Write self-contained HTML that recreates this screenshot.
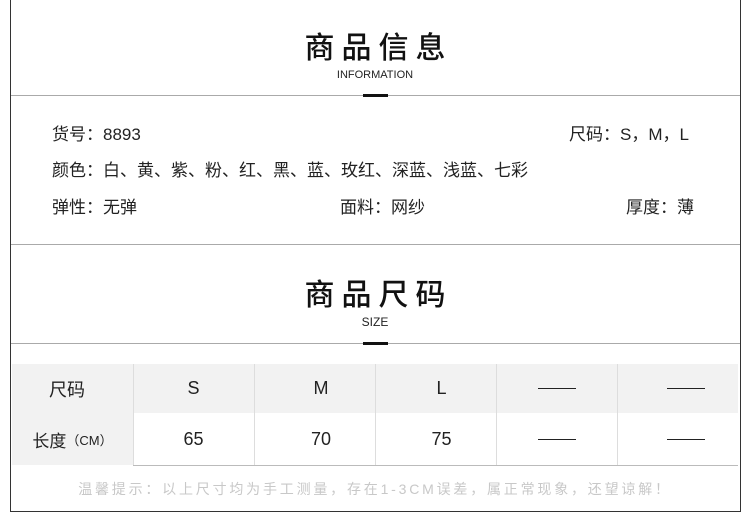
<!DOCTYPE html>
<html><head><meta charset="utf-8"><style>
*{margin:0;padding:0;box-sizing:border-box}
body{width:750px;height:512px;background:#fff;position:relative;overflow:hidden;font-family:"Liberation Sans","Noto Sans CJK SC",sans-serif;color:#222}
.a{position:absolute}
.frame{left:10px;top:0;width:731px;height:512px;border-left:1.5px solid #333;border-right:1.5px solid #333;border-bottom:1.5px solid #333}
.hl{height:1px;background:#aaa;left:11px;width:729px}
.bar{width:25px;height:3px;background:#111;left:363px}
.title{width:750px;left:0;text-align:center;font-size:30px;letter-spacing:7px;padding-left:7px;font-weight:500;color:#111}
.sub{width:750px;left:0;text-align:center;font-size:11px;color:#222}
.t{font-size:17px;white-space:nowrap}
.cell{position:absolute;display:flex;align-items:center;justify-content:center;font-size:18px;color:#222}
.dash{display:inline-block;width:38px;height:1px;background:#222}
</style></head><body>
<div class="a frame"></div>
<div class="a title" style="top:23px">商品信息</div>
<div class="a sub" style="top:69px">INFORMATION</div>
<div class="a hl" style="top:95px"></div>
<div class="a bar" style="top:94px"></div>
<div class="a t" style="left:52px;top:120px">货号：8893</div>
<div class="a t" style="left:569px;top:120px">尺码：S，M，L</div>
<div class="a t" style="left:52px;top:156px">颜色：白、黄、紫、粉、红、黑、蓝、玫红、深蓝、浅蓝、七彩</div>
<div class="a t" style="left:52px;top:193px">弹性：无弹</div>
<div class="a t" style="left:340px;top:193px">面料：网纱</div>
<div class="a t" style="left:626px;top:193px">厚度：薄</div>
<div class="a hl" style="top:244px"></div>
<div class="a title" style="top:270px">商品尺码</div>
<div class="a sub" style="top:315px;font-size:12px">SIZE</div>
<div class="a hl" style="top:343px"></div>
<div class="a bar" style="top:342px"></div>
<div class="a" style="left:12px;top:364px;width:726px;height:49px;background:#f2f2f2"></div>
<div class="a" style="left:12px;top:413px;width:121px;height:52px;background:#f2f2f2"></div>
<div class="a" style="left:133px;top:465px;width:605px;height:1px;background:#bbb"></div>
<div class="a" style="left:133px;top:364px;width:1px;height:101px;background:#ddd"></div>
<div class="a" style="left:254px;top:364px;width:1px;height:101px;background:#ddd"></div>
<div class="a" style="left:375px;top:364px;width:1px;height:101px;background:#ddd"></div>
<div class="a" style="left:496px;top:364px;width:1px;height:101px;background:#ddd"></div>
<div class="a" style="left:617px;top:364px;width:1px;height:101px;background:#ddd"></div>
<div class="cell" style="left:12px;top:364px;width:110px;height:49px">尺码</div>
<div class="cell" style="left:133px;top:364px;width:121px;height:49px">S</div>
<div class="cell" style="left:254px;top:364px;width:134px;height:49px">M</div>
<div class="cell" style="left:375px;top:364px;width:133px;height:49px">L</div>
<div class="cell" style="left:496px;top:364px;width:121px;height:49px"><span class="dash"></span></div>
<div class="cell" style="left:617px;top:364px;width:138px;height:49px"><span class="dash"></span></div>
<div class="cell" style="left:12px;top:413px;width:121px;height:52px;font-size:17px">长度<span style="font-size:13px">（CM）</span></div>
<div class="cell" style="left:133px;top:413px;width:121px;height:52px">65</div>
<div class="cell" style="left:254px;top:413px;width:134px;height:52px">70</div>
<div class="cell" style="left:375px;top:413px;width:133px;height:52px">75</div>
<div class="cell" style="left:496px;top:413px;width:121px;height:52px"><span class="dash"></span></div>
<div class="cell" style="left:617px;top:413px;width:138px;height:52px"><span class="dash"></span></div>
<div class="a" style="left:0;width:750px;top:479px;text-align:center;font-size:14px;color:#c8c8c8;letter-spacing:2.8px">温馨提示：以上尺寸均为手工测量，存在1-3CM误差，属正常现象，还望谅解！</div>
</body></html>
